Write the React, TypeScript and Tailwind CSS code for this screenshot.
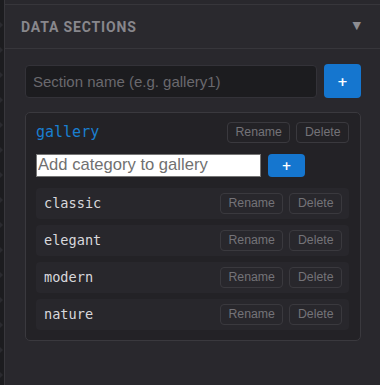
import { useState } from "react";

const CATEGORIES = ["classic", "elegant", "modern", "nature"];

const mono = "font-['DejaVu_Sans_Mono',monospace]";
const sans = "font-['Liberation_Sans',Arial,sans-serif]";

function SmallButton({ label }: { label: string }) {
  return (
    <button
      className={`h-[21px] px-[7.5px] rounded-[4px] border border-[#3a393e] bg-transparent text-[12.3px] leading-none text-[#747378] ${sans}`}
    >
      {label}
    </button>
  );
}

function CategoryRow({ name }: { name: string }) {
  return (
    <div className="h-[31px] flex items-center justify-between pl-[8px] pr-[7px] rounded-[4px] bg-[#28272c]">
      <span className={`text-[13.6px] leading-none text-[#d8d8dc] ${mono}`}>{name}</span>
      <div className="flex gap-[6px]">
        <SmallButton label="Rename" />
        <SmallButton label="Delete" />
      </div>
    </div>
  );
}

export default function App() {
  const [section, setSection] = useState("");
  const [category, setCategory] = useState("");

  return (
    <div className="w-[380px] h-[385px] flex bg-[#29282d] overflow-hidden">
      {/* gutter */}
      <div className="w-[5px] shrink-0 bg-[#1c1c1f] border-r border-[#38373c] flex flex-col items-start pt-[22px] gap-[19px]">
        {Array.from({ length: 15 }).map((_, i) => (
          <div
            key={i}
            className="w-0 h-0 border-y-[3px] border-y-transparent border-l-[3px] border-l-[#2a2a2f]"
          />
        ))}
      </div>

      <div className="flex-1 flex flex-col">
        {/* header */}
        <div className="mt-[4px] h-[45px] border-t border-b border-[#37363b] bg-[#2a292e] flex items-center justify-between pl-[16px] pr-[19px]">
          <span className="text-[14px] leading-none font-bold tracking-[0.06em] text-[#88878c] font-['Roboto',sans-serif]">
            DATA SECTIONS
          </span>
          <span className="text-[11px] text-[#8e8d92] font-['DejaVu_Sans',sans-serif]">▼</span>
        </div>

        {/* body */}
        <div className="pt-[15px] pl-[20px] pr-[13px]">
          <div className="flex items-center gap-[7px]">
            <input
              value={section}
              onChange={(e) => setSection(e.target.value)}
              placeholder="Section name (e.g. gallery1)"
              className={`w-[292px] h-[33px] px-[7px] rounded-[4px] bg-[#1c1c1f] border border-[#333238] text-[15px] text-[#ddd] placeholder:text-[#6a696e] outline-none ${sans}`}
            />
            <button className="w-[37px] h-[34px] rounded-[4px] bg-[#1576cf] text-white text-[13px] font-bold leading-none font-['DejaVu_Sans',sans-serif]">
              +
            </button>
          </div>

          <div className="mt-[14px] w-[336px] rounded-[5px] border border-[#3a393e] bg-[#232226] pt-[9px] pb-[10px] pl-[10px] pr-[11px]">
            <div className="h-[21px] flex items-center justify-between">
              <span className={`text-[15px] leading-none text-[#1a7fd0] ${mono}`}>gallery</span>
              <div className="flex gap-[6px]">
                <SmallButton label="Rename" />
                <SmallButton label="Delete" />
              </div>
            </div>

            <div className="mt-[11px] h-[23px] flex items-center gap-[7px]">
              <input
                value={category}
                onChange={(e) => setCategory(e.target.value)}
                placeholder="Add category to gallery"
                className={`w-[225px] h-[23px] px-[1px] bg-white border border-[#767676] text-[16.6px] text-black placeholder:text-[#707070] outline-none ${sans}`}
              />
              <button className="w-[37px] h-[23px] rounded-[4px] bg-[#1576cf] text-white text-[12px] font-bold leading-none font-['DejaVu_Sans',sans-serif]">
                +
              </button>
            </div>

            <div className="mt-[11px] flex flex-col gap-[6px]">
              {CATEGORIES.map((c) => (
                <CategoryRow key={c} name={c} />
              ))}
            </div>
          </div>
        </div>
      </div>
    </div>
  );
}
